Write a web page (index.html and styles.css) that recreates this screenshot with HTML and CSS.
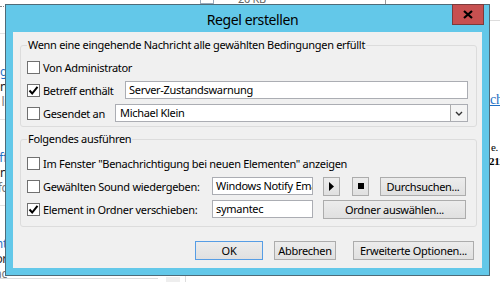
FILE: index.html
```html
<!DOCTYPE html>
<html lang="de">
<head>
    <meta charset="UTF-8">
    <title>Regel erstellen</title>
    <link rel="stylesheet" href="styles.css">
</head>
<body>
    <div class="desktop">
        <!-- Outlook window behind the dialog -->
        <div class="backdrop">
            <span class="bg-dots"></span>
            <span class="bg-top-icon"></span>
            <span class="bg-size">20 KB</span>
            <span class="bg-top-line"></span>
            <div class="bg-mails">
                <div class="bg-mail">
                    <span class="from">Administration</span>
                    <span class="subject">Server-Warnung</span>
                    <span class="preview">Zusammenfassung li</span>
                </div>
                <div class="bg-mail">
                    <span class="from">Michael Klein</span>
                    <span class="subject">Betreff</span>
                    <span class="preview">Hallo, bitte prüfc</span>
                </div>
                <div class="bg-mail">
                    <span class="from">Monitor</span>
                    <span class="subject">Bericht</span>
                    <span class="preview">Hinweis zur Abfrac</span>
                </div>
                <div class="bg-mail short">
                    <span class="subject">Anhang abc</span>
                </div>
            </div>
            <span class="bg-right-line"></span>
            <a class="bg-link">ch</a>
            <span class="bg-note">e.</span>
            <span class="bg-num">211</span>
            <span class="bg-bottom-line"></span>
            <span class="bg-bottom-block"></span>
            <span class="bg-bottom-rule"></span>
        </div>

        <div class="dialog">
            <div class="titlebar">
                <span class="title">Regel erstellen</span>
                <span class="close">
                    <svg width="10" height="9" viewBox="0 0 10 9"><path d="M1 1 L9 8 M9 1 L1 8" stroke="#000" stroke-width="2.2"/></svg>
                </span>
            </div>
            <div class="client">
                <fieldset class="group conditions">
                    <legend>Wenn eine eingehende Nachricht alle gewählten Bedingungen erfüllt</legend>
                    <div class="row">
                        <label class="check"><span class="box"></span>Von Administrator</label>
                    </div>
                    <div class="row">
                        <label class="check subject-label"><span class="box"><svg width="11" height="11" viewBox="0 0 11 11"><path d="M1.5 5.5 L4.2 8.5 L9.5 1.8" fill="none" stroke="#000" stroke-width="2"/></svg></span>Betreff enthält</label>
                        <div class="field grow">Server-Zustandswarnung</div>
                    </div>
                    <div class="row">
                        <label class="check sent-label"><span class="box"></span>Gesendet an</label>
                        <div class="field grow combo">
                            <span>Michael Klein</span>
                            <span class="drop"><svg width="8" height="5" viewBox="0 0 8 5"><path d="M1 1 L4 4 L7 1" fill="none" stroke="#333" stroke-width="1.4"/></svg></span>
                        </div>
                    </div>
                </fieldset>

                <fieldset class="group actions-group">
                    <legend>Folgendes ausführen</legend>
                    <div class="row">
                        <label class="check"><span class="box"></span>Im Fenster "Benachrichtigung bei neuen Elementen" anzeigen</label>
                    </div>
                    <div class="row">
                        <label class="check wide-label"><span class="box"></span>Gewählten Sound wiedergeben:</label>
                        <div class="field short">Windows Notify Email.wav</div>
                        <button class="btn icon play"><svg width="5" height="9" viewBox="0 0 5 9"><path d="M0 0 L5 4.5 L0 9 Z" fill="#000"/></svg></button>
                        <button class="btn icon stop"><span class="square"></span></button>
                        <button class="btn browse">Durchsuchen...</button>
                    </div>
                    <div class="row">
                        <label class="check wide-label"><span class="box"><svg width="11" height="11" viewBox="0 0 11 11"><path d="M1.5 5.5 L4.2 8.5 L9.5 1.8" fill="none" stroke="#000" stroke-width="2"/></svg></span>Element in Ordner verschieben:</label>
                        <div class="field short">symantec</div>
                        <button class="btn folder">Ordner auswählen...</button>
                    </div>
                </fieldset>

                <div class="buttons">
                    <button class="btn ok">OK</button>
                    <button class="btn cancel">Abbrechen</button>
                    <button class="btn advanced">Erweiterte Optionen...</button>
                </div>
            </div>
        </div>
    </div>
</body>
</html>
```

FILE: styles.css
```css
* {
    box-sizing: border-box;
}

body {
    margin: 0;
    background: #fff;
    font-family: "Noto Sans", "Open Sans", sans-serif;
    font-size: 11px;
    letter-spacing: -0.3px;
    color: #000;
    overflow: hidden;
}

.desktop {
    position: relative;
    width: 500px;
    height: 282px;
    overflow: hidden;
}

/* background window bits */
.backdrop span,
.backdrop a,
.backdrop div {
    position: absolute;
}

.bg-dots {
    left: 0;
    top: 6px;
    width: 6px;
    border-top: 1px dotted #888;
}

.bg-top-icon {
    left: 200px;
    top: 0;
    width: 14px;
    height: 4px;
    border: 1px solid #9ab;
    border-top: 0;
}

.bg-size {
    left: 238px;
    top: -9px;
    font-size: 11px;
    color: #666;
}

.bg-top-line {
    left: 385px;
    top: 0;
    height: 5px;
    border-left: 1px solid #999;
}

.bg-mails {
    left: -120px;
    top: 33px;
    width: 127px;
}

.bg-mail {
    position: relative !important;
    display: flex;
    flex-direction: column;
    align-items: flex-end;
    border-top: 1px solid #e3e3e3;
    padding: 30px 0 10px;
    line-height: 15px;
    font-size: 12px;
}

.bg-mail span {
    position: static !important;
    white-space: nowrap;
}

.bg-mail .from {
    color: #222;
    order: 2;
}

.bg-mail .subject {
    color: #1e6fc4;
    order: 1;
}

.bg-mail .preview {
    color: #777;
    order: 3;
}

.bg-mail.short {
    padding-top: 24px;
}

.bg-right-line {
    left: 486px;
    top: 20px;
    width: 14px;
    border-top: 1px solid #ddd;
}

.bg-link {
    left: 490px;
    top: 92px;
    font-family: "Liberation Serif", serif;
    font-size: 14px;
    color: #1e6fc4;
    text-decoration: underline;
}

.bg-note {
    left: 491px;
    top: 141px;
    font-family: "Liberation Serif", serif;
    font-size: 11px;
    line-height: 12px;
}

.bg-num {
    left: 489px;
    top: 155px;
    font-family: "Liberation Serif", serif;
    font-size: 11px;
    line-height: 12px;
    font-weight: bold;
}

.bg-bottom-line {
    left: 0;
    top: 278px;
    width: 158px;
    border-top: 1px solid #ddd;
}

.bg-bottom-block {
    left: 166px;
    top: 277px;
    width: 14px;
    height: 5px;
    background: #eee;
}

.bg-bottom-rule {
    left: 185px;
    top: 276px;
    height: 6px;
    border-left: 1px solid #ddd;
}

/* dialog window */
.dialog {
    position: absolute;
    left: 5px;
    top: 4px;
    width: 485px;
    height: 272px;
    border: 1px solid #4f6b78;
    background: #63c8e9;
    padding: 0 7px 7px;
    display: flex;
    flex-direction: column;
}

.titlebar {
    height: 27px;
    flex: none;
    display: flex;
    align-items: center;
    justify-content: center;
}

.title {
    font-size: 14px;
    letter-spacing: -0.4px;
    margin-top: 1px;
    margin-left: 10px;
}

.close {
    position: absolute;
    top: -1px;
    right: 5px;
    width: 32px;
    height: 21px;
    background: #c75050;
    border: 1px solid #7c3b3b;
    display: flex;
    align-items: center;
    justify-content: center;
}

.client {
    flex: 1;
    background: #f0f0f0;
    padding: 5px 5px 0 7px;
    display: flex;
    flex-direction: column;
}

.group {
    margin: 0;
    border: 1px solid #dcdcdc;
    border-radius: 3px;
    padding: 5px 8px 4px 6px;
    min-width: 0;
    display: flex;
    flex-direction: column;
    gap: 5px;
}

.group legend {
    padding: 0 1px;
    line-height: 16px;
    font-size: 11px;
    margin-left: 0;
}

.actions-group {
    margin-top: 4px;
    padding-top: 7px;
    padding-bottom: 8px;
}

.row {
    height: 18px;
    display: flex;
    align-items: center;
}

.check {
    display: flex;
    align-items: center;
    white-space: nowrap;
    flex: none;
}

.box {
    width: 13px;
    height: 13px;
    border: 1px solid #707070;
    background: #fff;
    margin-right: 3px;
    display: flex;
    align-items: center;
    justify-content: center;
}

.subject-label {
    width: 98px;
}

.sent-label {
    width: 88px;
}

.wide-label {
    width: 185px;
}

.field {
    height: 18px;
    border: 1px solid #abadb3;
    background: #fff;
    padding: 0 3px;
    line-height: 16px;
    white-space: nowrap;
    overflow: hidden;
}

.grow {
    flex: 1;
}

.combo {
    display: flex;
    justify-content: space-between;
    padding: 0 0 0 4px;
}

.drop {
    width: 17px;
    height: 16px;
    border-left: 1px solid #acacac;
    background: #f4f4f4;
    display: flex;
    align-items: center;
    justify-content: center;
}

.short {
    width: 101px;
    flex: none;
}

.btn {
    height: 19px;
    border: 1px solid #acacac;
    background: linear-gradient(#ececec, #e0e0e0);
    font: inherit;
    letter-spacing: inherit;
    color: #000;
    padding: 0;
    white-space: nowrap;
    display: flex;
    align-items: center;
    justify-content: center;
    flex: none;
}

.icon {
    width: 17px;
}

.play {
    margin-left: 10px;
}

.stop {
    margin-left: 12px;
}

.square {
    width: 6px;
    height: 6px;
    background: #000;
}

.browse {
    margin-left: 11px;
    width: 86px;
}

.folder {
    margin-left: 10px;
    width: 143px;
}

.buttons {
    margin-top: 14px;
    display: flex;
    justify-content: flex-end;
    padding-right: 3px;
}

.ok {
    width: 68px;
    border-color: #569de5;
}

.cancel {
    width: 62px;
    margin-left: 11px;
}

.advanced {
    width: 121px;
    margin-left: 17px;
}
```
